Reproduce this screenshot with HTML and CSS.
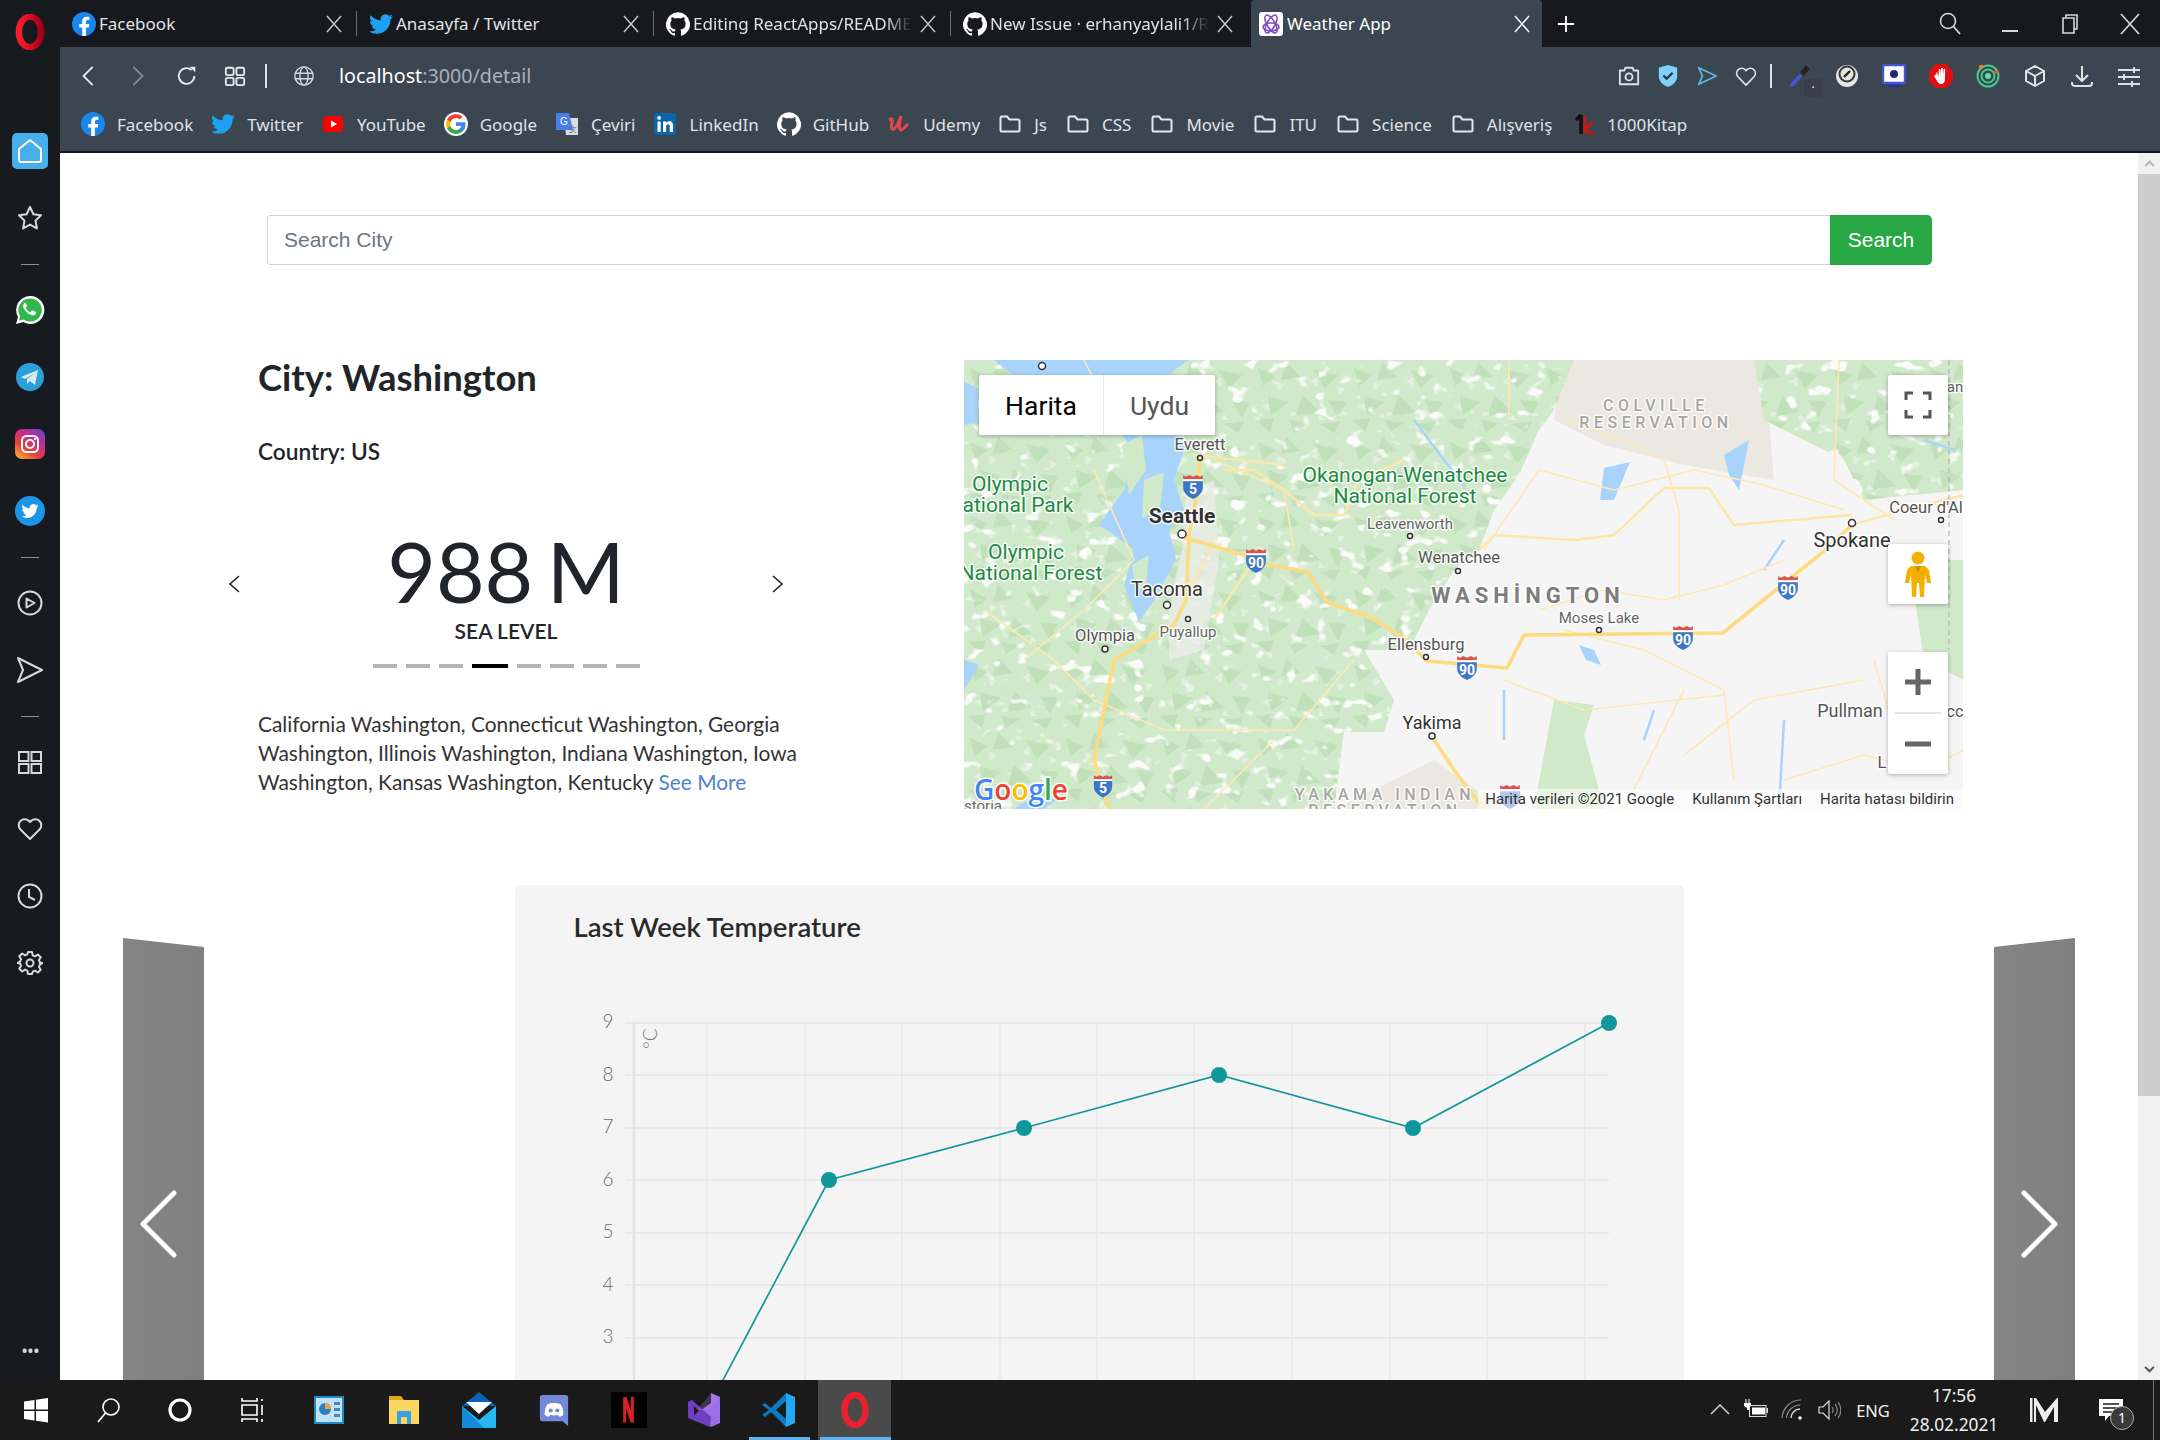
FILE: index.html
```html
<!DOCTYPE html>
<html lang="en">
<head>
<meta charset="utf-8">
<title>Weather App</title>
<link rel="stylesheet" href="styles.css">
</head>
<body>
<svg class="defs" width="0" height="0" aria-hidden="true">
  <defs>
    <symbol id="i-fb" viewBox="0 0 24 24"><circle cx="12" cy="12" r="12" fill="#1a86ee"/><path fill="#fff" d="M16.7 15.5l.5-3.5h-3.3V9.8c0-1 .5-1.9 2-1.9h1.5V5s-1.4-.2-2.7-.2c-2.7 0-4.5 1.6-4.5 4.6V12H7.2v3.5h3v8.4h3.7v-8.4z"/></symbol>
    <symbol id="i-tw" viewBox="0 0 24 24"><path fill="#1da1f2" d="M23.95 4.57a10 10 0 0 1-2.82.77 4.96 4.96 0 0 0 2.16-2.72c-.95.55-2 .96-3.12 1.19a4.92 4.92 0 0 0-8.38 4.48C7.69 8.09 4.07 6.13 1.64 3.16a4.82 4.82 0 0 0-.67 2.48c0 1.71.87 3.21 2.19 4.1a4.9 4.9 0 0 1-2.23-.61v.06c0 2.39 1.7 4.38 3.95 4.83a5 5 0 0 1-2.21.08 4.94 4.94 0 0 0 4.6 3.42A9.87 9.87 0 0 1 0 19.54a14 14 0 0 0 7.56 2.21c9.05 0 14-7.5 14-13.98 0-.21 0-.42-.02-.63a9.94 9.94 0 0 0 2.46-2.55z"/></symbol>
    <symbol id="i-gh" viewBox="0 0 24 24"><path fill="#fff" d="M12 .3a12 12 0 0 0-3.8 23.4c.6.1.8-.3.8-.6v-2c-3.3.7-4-1.6-4-1.6-.6-1.4-1.4-1.8-1.4-1.8-1-.7.1-.7.1-.7 1.2.1 1.8 1.2 1.8 1.2 1 1.8 2.8 1.3 3.5 1 .1-.8.4-1.3.8-1.6-2.7-.3-5.5-1.3-5.5-6 0-1.2.5-2.3 1.3-3.1-.2-.4-.6-1.6 0-3.2 0 0 1-.3 3.4 1.2a11.5 11.5 0 0 1 6 0c2.3-1.5 3.3-1.2 3.3-1.2.6 1.6.2 2.8 0 3.2.9.8 1.3 1.9 1.3 3.2 0 4.6-2.8 5.6-5.5 5.9.5.4.9 1 .9 2.2v3.3c0 .3.1.7.8.6A12 12 0 0 0 12 .3"/></symbol>
    <symbol id="i-folder" viewBox="0 0 24 24"><path fill="none" stroke="#e4e8ec" stroke-width="2" stroke-linejoin="round" d="M2.5 6a1.5 1.5 0 0 1 1.5-1.5h5l2.5 3h8.5a1.5 1.5 0 0 1 1.5 1.5v9a1.5 1.5 0 0 1-1.5 1.5H4A1.5 1.5 0 0 1 2.5 18z"/></symbol>
    <symbol id="i-shield" viewBox="0 0 24 24"><path fill="#7fd0fb" d="M12 0l10 3v9c0 6-4.500 10-10 12C6.500 22 2 18 2 12V3z"/><path fill="none" stroke="#23303c" stroke-width="2.400" d="M7 11.500l3.500 3.500L17 8.500"/></symbol>
    <symbol id="i-90" viewBox="0 0 24 28"><path fill="#d9534f" d="M1 6V1l3 2 4-2 4 2 4-2 4 2 3-2v5z"/><path fill="#fff" d="M1 6h22v2H1z"/><path fill="#3d76c8" d="M1 8h22v7c0 6-5 10-11 13C6 25 1 21 1 15z"/></symbol>
    <symbol id="i-x" viewBox="0 0 16 18"><path fill="none" stroke="currentColor" stroke-width="1.400" d="M1 1l14 16M15 1L1 17"/></symbol>
  </defs>
</svg>

<div class="window">
  <div class="browser">
    <aside class="sidebar">
      <div class="side-logo">
        <svg class="ic-logo" viewBox="0 0 30 34"><defs><linearGradient id="op" x1="0" x2="1"><stop offset="0" stop-color="#ff1b2d"/><stop offset="1" stop-color="#a70014"/></linearGradient></defs><ellipse cx="15" cy="17" rx="10.500" ry="14.500" fill="none" stroke="url(#op)" stroke-width="6"/></svg>
      </div>
      <div class="side-item"><span class="home-btn"><svg class="ic-26" viewBox="0 0 26 26"><path fill="none" stroke="#fff" stroke-width="2" stroke-linejoin="round" d="M2 11L13 2l11 9v11a2 2 0 0 1-2 2H4a2 2 0 0 1-2-2z"/></svg></span></div>
      <div class="side-item"><svg class="ic-26" viewBox="0 0 26 26"><path fill="none" stroke="#d5d8dc" stroke-width="2" stroke-linejoin="round" d="M13 2l3.400 7.200 7.600 1-5.500 5.400 1.400 7.800-6.900-3.800-6.900 3.800 1.400-7.800L2 10.200l7.600-1z"/></svg></div>
      <div class="side-sep"></div>
      <div class="side-item"><svg class="ic-30" viewBox="0 0 30 30"><path fill="#fff" d="M15 1a14 14 0 0 0-12 21L1 29l7.300-1.900A14 14 0 1 0 15 1z"/><path fill="#31b84c" d="M15 3.400a11.600 11.600 0 0 0-9.800 17.800l-1.200 4.600 4.700-1.200A11.600 11.600 0 1 0 15 3.400z"/><path fill="#fff" d="M11 8.500c-.400-.900-1.300-.800-1.800-.3-1.500 1.500-1.500 3.600.3 6.300 2.400 3.500 5.500 5.700 8.300 5.800 1.800 0 3.200-1.200 3.300-2.600 0-.4-.100-.7-.500-.9l-2.900-1.400c-.4-.2-.7-.1-1 .2l-1 1.200c-.2.300-.5.300-.8.200-1.700-.7-3.100-2-4-3.600-.2-.3-.1-.5.100-.8l.8-1c.2-.2.200-.5.100-.8z"/></svg></div>
      <div class="side-item"><svg class="ic-28" viewBox="0 0 28 28"><circle cx="14" cy="14" r="14" fill="#2a9fd8"/><path fill="#dbeaf4" d="M5 14l17-7-3 15-5-4-3 3v-5l8-6-10 6z"/></svg></div>
      <div class="side-item"><span class="insta"><svg class="ic-30" viewBox="0 0 30 30"><rect x="7" y="7" width="16" height="16" rx="4.500" fill="none" stroke="#fff" stroke-width="2"/><circle cx="15" cy="15" r="4" fill="none" stroke="#fff" stroke-width="2"/><circle cx="20" cy="10" r="1.200" fill="#fff"/></svg></span></div>
      <div class="side-item"><svg class="ic-30" viewBox="0 0 30 30"><circle cx="15" cy="15" r="15" fill="#1d95e6"/><svg x="6.500" y="6.500" width="17" height="17" viewBox="0 0 24 24"><path fill="#fff" d="M23.950 4.570a10 10 0 0 1-2.820.77 4.960 4.960 0 0 0 2.160-2.720c-.95.55-2 .96-3.120 1.190a4.920 4.920 0 0 0-8.380 4.480C7.690 8.090 4.070 6.130 1.640 3.160a4.820 4.820 0 0 0-.67 2.480c0 1.710.87 3.210 2.190 4.100a4.900 4.900 0 0 1-2.230-.61v.06c0 2.390 1.700 4.380 3.950 4.830a5 5 0 0 1-2.210.08 4.940 4.940 0 0 0 4.600 3.420A9.870 9.870 0 0 1 0 19.540a14 14 0 0 0 7.560 2.210c9.050 0 14-7.500 14-13.980 0-.21 0-.42-.02-.63a9.940 9.940 0 0 0 2.460-2.550z"/></svg></svg></div>
      <div class="side-sep"></div>
      <div class="side-item"><svg class="ic-26" viewBox="0 0 26 26"><circle cx="13" cy="13" r="11.500" fill="none" stroke="#d5d8dc" stroke-width="2"/><path fill="none" stroke="#d5d8dc" stroke-width="2" stroke-linejoin="round" d="M9.500 8.500l8 4.500-8 4.500z"/></svg></div>
      <div class="side-item"><svg class="ic-28" viewBox="0 0 28 28"><path fill="none" stroke="#d5d8dc" stroke-width="2" stroke-linejoin="round" d="M2 2l24 12-24 12 5-12z"/></svg></div>
      <div class="side-sep"></div>
      <div class="side-item"><svg class="ic-26" viewBox="0 0 26 26"><g fill="none" stroke="#d5d8dc" stroke-width="2"><rect x="2" y="3" width="9.500" height="9"/><rect x="14.500" y="3" width="9.500" height="9"/><rect x="2" y="15" width="9.500" height="9"/><rect x="14.500" y="15" width="9.500" height="9"/></g></svg></div>
      <div class="side-item"><svg class="ic-26" viewBox="0 0 26 26"><path fill="none" stroke="#d5d8dc" stroke-width="2" stroke-linejoin="round" d="M13 23L3.500 13.500a6 6 0 0 1 8.500-8.500l1 1 1-1a6 6 0 0 1 8.500 8.500z"/></svg></div>
      <div class="side-item"><svg class="ic-26" viewBox="0 0 26 26"><circle cx="13" cy="13" r="11.500" fill="none" stroke="#d5d8dc" stroke-width="2"/><path fill="none" stroke="#d5d8dc" stroke-width="2" d="M12 6v8l6 3"/></svg></div>
      <div class="side-item"><svg class="ic-26" viewBox="0 0 26 26"><circle cx="13" cy="13" r="3.500" fill="none" stroke="#d5d8dc" stroke-width="2"/><path fill="none" stroke="#d5d8dc" stroke-width="2" stroke-linejoin="round" d="M11 2h4l.7 3.300 2.300 1 2.900-1.800 2.800 2.800-1.800 2.900 1 2.300L26 13l-3.100 1.500-1 2.300 1.800 2.900-2.800 2.800-2.900-1.800-2.300 1L15 24h-4l-.7-3.300-2.300-1-2.900 1.800-2.800-2.800 1.800-2.900-1-2.300L0 13l3.100-1.500 1-2.300-1.800-2.900 2.800-2.800 2.900 1.800 2.300-1z"/></svg></div>
      <div class="side-more">&#8226;&#8226;&#8226;</div>
    </aside>

    <div class="main">
      <div class="tabstrip">
        <div class="tab"><svg class="fav"><use href="#i-fb"/></svg><span class="tab-title">Facebook</span><svg class="tab-x"><use href="#i-x"/></svg></div>
        <div class="tab"><svg class="fav"><use href="#i-tw"/></svg><span class="tab-title">Anasayfa / Twitter</span><svg class="tab-x"><use href="#i-x"/></svg></div>
        <div class="tab"><svg class="fav"><use href="#i-gh"/></svg><span class="tab-title tab-fade">Editing ReactApps/README</span><svg class="tab-x"><use href="#i-x"/></svg></div>
        <div class="tab tab-plain"><svg class="fav"><use href="#i-gh"/></svg><span class="tab-title tab-fade">New Issue · erhanyaylali1/R</span><svg class="tab-x"><use href="#i-x"/></svg></div>
        <div class="tab tab-active">
          <span class="fav-box"><svg class="ic-fill" viewBox="0 0 24 24"><g fill="none" stroke="#7d4fc4" stroke-width="1.600"><ellipse cx="12" cy="12" rx="10" ry="4" transform="rotate(60 12 12)"/><ellipse cx="12" cy="12" rx="10" ry="4" transform="rotate(-60 12 12)"/><ellipse cx="12" cy="15" rx="8" ry="4"/></g></svg></span>
          <span class="tab-title">Weather App</span><svg class="tab-x"><use href="#i-x"/></svg>
        </div>
        <svg class="tab-plus" viewBox="0 0 20 20"><path stroke="#fff" stroke-width="2" d="M10 1v18M1 10h18"/></svg>
        <div class="win-ctrls">
          <span class="win-c"><svg class="ic-24" viewBox="0 0 24 24"><circle cx="10" cy="9" r="7.500" fill="none" stroke="#d5d8dc" stroke-width="1.600"/><path stroke="#d5d8dc" stroke-width="1.800" d="M15.500 14.500l6.500 7.500"/></svg></span>
          <span class="win-c"><svg class="ic-24" viewBox="0 0 24 24"><path stroke="#d5d8dc" stroke-width="2" d="M4 19h16"/></svg></span>
          <span class="win-c"><svg class="ic-24" viewBox="0 0 24 24"><path fill="none" stroke="#d5d8dc" stroke-width="1.600" d="M8 6V3h11v14h-3M5 6h11v15H5z"/></svg></span>
          <span class="win-c"><svg class="ic-24" viewBox="0 0 24 24"><path stroke="#d5d8dc" stroke-width="1.700" d="M3 2l18 20M21 2L3 22"/></svg></span>
        </div>
      </div>

      <div class="toolbar">
        <svg class="tb tb-back" viewBox="0 0 24 24"><path fill="none" stroke="#e8ebee" stroke-width="2" d="M16 2L6 12l10 10"/></svg>
        <svg class="tb tb-fwd" viewBox="0 0 24 24"><path fill="none" stroke="#7f8994" stroke-width="2" d="M8 2l10 10L8 22"/></svg>
        <svg class="tb tb-reload" viewBox="0 0 24 24"><path fill="none" stroke="#e8ebee" stroke-width="2" d="M20 12a8.500 8.500 0 1 1-3-6.500"/><path fill="#e8ebee" d="M15 2l6 0v6z"/></svg>
        <svg class="tb tb-grid" viewBox="0 0 24 24"><g fill="none" stroke="#e8ebee" stroke-width="2"><rect x="2" y="3" width="8.500" height="8" rx="1.500"/><rect x="13.500" y="3" width="8.500" height="8" rx="1.500"/><rect x="2" y="14" width="8.500" height="8" rx="1.500"/><rect x="13.500" y="14" width="8.500" height="8" rx="1.500"/></g></svg>
        <span class="tb-sep"></span>
        <svg class="tb tb-globe" viewBox="0 0 24 24"><g fill="none" stroke="#d5d8dc" stroke-width="1.500"><circle cx="12" cy="12" r="10"/><ellipse cx="12" cy="12" rx="4.500" ry="10"/><path d="M2 9h20M2 15h20"/></g></svg>
        <div class="url"><span class="url-host">localhost</span><span class="url-rest">:3000/detail</span></div>
        <div class="tb-right">
          <div class="tb-group-a">
            <svg class="tr" viewBox="0 0 24 24"><path fill="none" stroke="#dfe2e5" stroke-width="2" stroke-linejoin="round" d="M2 6h5l1-3h8l1 3h5v15H2z"/><circle cx="12" cy="13" r="3.800" fill="none" stroke="#dfe2e5" stroke-width="2"/></svg>
            <svg class="tr"><use href="#i-shield"/></svg>
            <svg class="tr" viewBox="0 0 24 24"><path fill="none" stroke="#63b4e4" stroke-width="2" stroke-linejoin="round" d="M3 3l19 9-19 9 4-9z"/></svg>
            <svg class="tr" viewBox="0 0 24 24"><path fill="none" stroke="#dfe2e5" stroke-width="1.800" stroke-linejoin="round" d="M12 22L3 12.500a5.500 5.500 0 0 1 8-7.500l1 1.200 1-1.200a5.500 5.500 0 0 1 8 7.500z"/></svg>
          </div>
          <span class="tr-sep"></span>
          <div class="tb-group-b">
            <span class="drop"><svg class="tr" viewBox="0 0 24 24"><path stroke="#4a54d8" stroke-width="4" d="M3 22l10-11"/><path stroke="#222" stroke-width="5" d="M14 10l6-7"/></svg><span class="drop-badge">.</span></span>
            <svg class="tr" viewBox="0 0 24 24"><circle cx="12" cy="12" r="11" fill="#e5e5e2"/><circle cx="12" cy="10" r="8.500" fill="#33383d"/><circle cx="12" cy="10" r="6.500" fill="#e5e5e2"/><path stroke="#222" stroke-width="2.400" d="M9 13l6-6"/></svg>
            <svg class="tr" viewBox="0 0 24 24"><path fill="#24368a" d="M5 19h14l-2 4H7z"/><rect x="1" y="1" width="22" height="18" rx="1.500" fill="#fff" stroke="#4054d8" stroke-width="2.400"/><circle cx="12" cy="10" r="4" fill="#1e2a78"/></svg>
            <svg class="tr" viewBox="0 0 24 24"><path fill="#e10f0f" d="M7 0h10l7 7v10l-7 7H7l-7-7V7z"/><path fill="#fff" d="M8 8l1.500 5 .3-8h1.500l.4 6 .4-7h1.700l.2 7 .7-6h1.500l-.3 11c0 2-1.500 4-3.800 4-2 0-3-1-4-3L5 12l1.300-1z"/></svg>
            <svg class="tr" viewBox="0 0 24 24"><circle cx="12" cy="12" r="10.500" fill="none" stroke="#45c98f" stroke-width="2"/><circle cx="12" cy="12" r="6.500" fill="none" stroke="#45c98f" stroke-width="2"/><circle cx="12" cy="12" r="3" fill="#5be3a4"/><circle cx="5" cy="3" r="2.200" fill="#e8812f"/><circle cx="20" cy="8" r="2" fill="#e8512f"/></svg>
            <svg class="tr" viewBox="0 0 24 24"><path fill="none" stroke="#dfe2e5" stroke-width="2" stroke-linejoin="round" d="M12 2l9 5v10l-9 5-9-5V7zM3 7l9 5 9-5M12 12v10"/></svg>
            <svg class="tr" viewBox="0 0 24 24"><path fill="none" stroke="#dfe2e5" stroke-width="2" d="M12 2v14M6 11l6 6 6-6M2 18v1a3 3 0 0 0 3 3h14a3 3 0 0 0 3-3v-1"/></svg>
            <svg class="tr" viewBox="0 0 24 24"><path fill="none" stroke="#dfe2e5" stroke-width="2" d="M1 6h22M1 13h22M1 20h22M17 3v6M7 10v6M15 17v6"/></svg>
          </div>
        </div>
      </div>

      <nav class="bookmarks">
        <a class="bm"><svg class="bm-ic"><use href="#i-fb"/></svg>Facebook</a>
        <a class="bm"><svg class="bm-ic"><use href="#i-tw"/></svg>Twitter</a>
        <a class="bm"><svg class="bm-ic" viewBox="0 0 24 24"><rect x="2" y="4" width="20" height="16" rx="4" fill="#f00"/><path fill="#fff" d="M10 8.500l6 3.500-6 3.500z"/></svg>YouTube</a>
        <a class="bm"><svg class="bm-ic" viewBox="0 0 24 24"><circle cx="12" cy="12" r="12" fill="#fff"/><path fill="#4285f4" d="M21.500 12.200c0-.7-.1-1.300-.2-1.900H12v3.700h5.300a4.600 4.600 0 0 1-2 3v2.500h3.200c1.900-1.700 3-4.300 3-7.300z"/><path fill="#34a853" d="M12 21.900c2.700 0 4.900-.9 6.500-2.400l-3.200-2.500c-.9.600-2 1-3.300 1-2.600 0-4.800-1.700-5.500-4.100H3.200v2.600A9.900 9.900 0 0 0 12 21.900z"/><path fill="#fbbc05" d="M6.500 13.900a5.900 5.900 0 0 1 0-3.800V7.500H3.200a9.900 9.900 0 0 0 0 8.900z"/><path fill="#ea4335" d="M12 6c1.500 0 2.800.5 3.800 1.500l2.800-2.800A9.900 9.900 0 0 0 3.200 7.500l3.300 2.600C7.200 7.700 9.400 6 12 6z"/></svg>Google</a>
        <a class="bm"><svg class="bm-ic" viewBox="0 0 24 24"><path fill="#dadce0" d="M9 6h14v17H11z"/><path fill="#4a7ee8" d="M1 1h13l4 17H1z"/><text x="5" y="13" class="bm-g">G</text><text x="14" y="20" class="bm-g bm-dim">文</text></svg>Çeviri</a>
        <a class="bm"><svg class="bm-ic" viewBox="0 0 24 24"><rect x="1" y="1" width="22" height="22" rx="2" fill="#0a66a8"/><path fill="#fff" d="M4.500 9.500h3.200V20H4.500zM6.100 4a1.900 1.900 0 1 1 0 3.800 1.900 1.900 0 0 1 0-3.800zM10 9.500h3v1.500c.5-1 1.700-1.800 3.300-1.800 3 0 3.700 2 3.700 4.700V20h-3.200v-5c0-1.300 0-2.800-1.700-2.800s-2 1.300-2 2.700V20H10z"/></svg>LinkedIn</a>
        <a class="bm"><svg class="bm-ic"><use href="#i-gh"/></svg>GitHub</a>
        <a class="bm"><svg class="bm-ic" viewBox="0 0 24 24"><path fill="none" stroke="#e2474b" stroke-width="3" d="M2 8c3-2 4-2 3 3-1 4-1 7 2 6 3-2 5-7 7-13-1 5-3 13 0 14 2 0 4-3 7-6"/></svg>Udemy</a>
        <a class="bm bm-f"><svg class="bm-ic"><use href="#i-folder"/></svg>Js</a>
        <a class="bm bm-f"><svg class="bm-ic"><use href="#i-folder"/></svg>CSS</a>
        <a class="bm bm-f"><svg class="bm-ic"><use href="#i-folder"/></svg>Movie</a>
        <a class="bm bm-f"><svg class="bm-ic"><use href="#i-folder"/></svg>ITU</a>
        <a class="bm bm-f"><svg class="bm-ic"><use href="#i-folder"/></svg>Science</a>
        <a class="bm bm-f"><svg class="bm-ic"><use href="#i-folder"/></svg>Alışveriş</a>
        <a class="bm"><svg class="bm-ic" viewBox="0 0 24 24"><path stroke="#111" stroke-width="3.500" d="M10 3v19M5 8l5-5"/><path stroke="#c01818" stroke-width="3" fill="none" d="M14 4v18M22 10l-8 7 8 6"/></svg>1000Kitap</a>
      </nav>

      <div class="viewport">
        <main class="page">
          <form class="search">
            <div class="search-input">Search City</div>
            <div class="search-btn">Search</div>
          </form>

          <section class="details">
            <div class="info">
              <h1 class="city">City: Washington</h1>
              <p class="country">Country: US</p>
              <div class="metric">
                <svg class="metric-arrow" viewBox="0 0 14 20"><path fill="none" stroke="#222" stroke-width="1.600" d="M12 2L3 10l9 8"/></svg>
                <div class="metric-body">
                  <div class="metric-value">988 M</div>
                  <div class="metric-label">SEA LEVEL</div>
                  <div class="dots">
                    <span class="dot"></span><span class="dot"></span><span class="dot"></span><span class="dot dot-on"></span><span class="dot"></span><span class="dot"></span><span class="dot"></span><span class="dot"></span>
                  </div>
                </div>
                <svg class="metric-arrow" viewBox="0 0 14 20"><path fill="none" stroke="#222" stroke-width="1.600" d="M2 2l9 8-9 8"/></svg>
              </div>
              <p class="about">California Washington, Connecticut Washington, Georgia Washington, Illinois Washington, Indiana Washington, Iowa Washington, Kansas Washington, Kentucky <a class="more">See More</a></p>
            </div>

            <div class="map">
              <svg class="map-canvas" viewBox="0 0 1000 449">
                <defs>
                  <pattern id="terrain" width="96" height="74" patternUnits="userSpaceOnUse">
                    <path fill="#b4d8ac" opacity=".55" d="M6 8l18 8-13 10zM34 2l15 15-20 3zM62 10l24 5-13 14zM16 36l21 6-18 13zM50 35l18 17-24 4zM76 40l18 2-8 17zM4 60l18-2-4 14zM37 60l19 3-14 9zM68 64l20-3-6 12z"/>
                    <path fill="#eef7ec" opacity=".6" d="M25 22l8 3-7 6zM58 22l7-5 1 9zM85 27l8 2-6 6zM10 46l6-3 1 8zM40 50l6 5-8 1zM68 54l5 6-7 0z"/>
                  </pattern>
                  <filter id="mottle" x="0" y="0" width="100%" height="100%">
                    <feTurbulence type="fractalNoise" baseFrequency=".016 .028" numOctaves="3" seed="7"/>
                    <feColorMatrix values="0 0 0 0 .66  0 0 0 0 .82  0 0 0 0 .64  2.400 0 0 0 -1.050"/>
                    <feComposite in2="SourceAlpha" operator="in"/>
                  </filter>
                  <filter id="patches" x="0" y="0" width="100%" height="100%">
                    <feTurbulence type="fractalNoise" baseFrequency=".06 .08" numOctaves="2" seed="21"/>
                    <feColorMatrix values="0 0 0 0 .96  0 0 0 0 .97  0 0 0 0 .95  0 9 0 0 -5.600"/>
                    <feComposite in2="SourceAlpha" operator="in"/>
                  </filter>
                </defs>
                <rect class="m-land" width="1000" height="449"/>
                <path class="m-res" d="M600 0H800L810 120 720 105 640 85 590 60zM370 449L470 400 540 449z"/>
                <path class="m-green" d="M0 0H610L590 50 575 70 555 115 530 150 515 190 490 210 465 250 445 290 400 290 430 340 420 372 380 372 370 449H0zM790 0H1000V130L900 140 880 100 800 60zM945 200H1000V320L960 300zM590 340L630 345 620 375 640 449H570z"/>
                <path class="m-mottle" d="M0 0H610L590 50 575 70 555 115 530 150 515 190 490 210 465 250 445 290 400 290 430 340 420 372 380 372 370 449H0zM790 0H1000V130L900 140 880 100 800 60z"/>
                <path class="m-tex" d="M0 0H610L590 50 575 70 555 115 530 150 515 190 490 210 465 250 445 290 400 290 430 340 420 372 380 372 370 449H0zM790 0H1000V130L900 140 880 100 800 60z"/>
                <path class="m-patch" d="M0 0H610L590 50 575 70 555 115 530 150 515 190 490 210 465 250 445 290 400 290 430 340 420 372 380 372 370 449H0zM790 0H1000V130L900 140 880 100 800 60z"/>
                <path class="m-urban" d="M222 130L250 120 255 200 240 290 205 300 205 250 218 190z"/>
                <path class="m-water" d="M150 60L200 58 222 85 210 120 220 150 205 170 212 200 190 240 175 262 160 225 170 190 150 175 135 165 160 130 170 95zM0 22L14 28V62L0 65zM30 0H225L205 14 120 30 60 24zM640 108L666 102 650 140 636 140zM615 285L630 290 637 305 622 300zM760 95L785 80 775 130 765 115zM0 300L15 305 0 330zM60 442L95 438 80 449H50z"/>
                <path class="m-island" d="M158 85L178 75 182 110 165 135zM180 120L200 112 196 150 178 158zM168 205L185 195 182 225 172 232zM205 30L222 25 224 60 208 55z"/>
                <path class="m-river" d="M450 60L480 100 500 125M820 180L800 210M990 90L960 80M690 350L680 380M820 360L815 449M540 330L540 380"/>
                <path class="m-line" d="M545 0V60M600 60L660 80 700 100 715 150 715 240M875 0L870 120 930 160M520 190L575 110 650 130 730 110 800 125 880 150M575 250L640 230 700 240 760 225 820 200M600 270L680 290 760 330 770 420M720 395L790 340 900 320M540 320L620 350 760 335M20 250L90 300 130 340 200 370 330 370 390 300M130 110L170 200 120 250 60 300M250 100L320 130 330 190M310 380L240 449M720 330L660 449M820 420L900 395 960 410 1000 390M910 300L930 370 960 410M120 0L150 60"/>
                <path class="m-road2" d="M320 105L230 95M260 110L290 110 320 130 350 155 380 155 395 120 440 100M515 190L530 175 610 180 650 175 700 128 745 128 770 165 888 155M222 240L250 180M290 200L250 260M140 30L240 30M888 165L940 150 1000 135"/>
                <path class="m-road" d="M218 177L280 195 305 205 344 212 363 242 408 258 440 278 463 301 543 308 560 275 759 273 808 233 859 192 888 165M236 98L232 140 225 175 222 240 210 265 150 300 130 400 145 449M470 380L490 410 520 449"/>
                <path class="m-border" d="M985 0V290"/>
                <g class="m-dots">
                  <circle cx="78" cy="6" r="3.500"/><circle cx="236" cy="98" r="2.500"/><circle cx="218" cy="174" r="4"/><circle cx="203" cy="245" r="3.500"/><circle cx="224" cy="259" r="2.500"/><circle cx="141" cy="289" r="3"/><circle cx="446" cy="176" r="2.500"/><circle cx="494" cy="211" r="2.500"/><circle cx="635" cy="270" r="2.500"/><circle cx="462" cy="297" r="2.500"/><circle cx="468" cy="376" r="3"/><circle cx="888" cy="163" r="3.500"/><circle cx="977" cy="160" r="2.500"/>
                </g>
                <g>
                  <g transform="translate(218 114)"><use href="#i-90" width="22" height="25"/><text x="11" y="20" class="m-shield-t">5</text></g>
                  <g transform="translate(281 188)"><use href="#i-90" width="22" height="25"/><text x="11" y="20" class="m-shield-t">90</text></g>
                  <g transform="translate(492 295)"><use href="#i-90" width="22" height="25"/><text x="11" y="20" class="m-shield-t">90</text></g>
                  <g transform="translate(708 265)"><use href="#i-90" width="22" height="25"/><text x="11" y="20" class="m-shield-t">90</text></g>
                  <g transform="translate(813 215)"><use href="#i-90" width="22" height="25"/><text x="11" y="20" class="m-shield-t">90</text></g>
                  <g transform="translate(129 414)"><use href="#i-90" width="20" height="24"/><text x="10" y="19" class="m-shield-t">5</text></g>
                  <g transform="translate(535 424)"><use href="#i-90" width="22" height="25"/></g>
                </g>
                <g class="m-text">
                  <text x="236" y="90" class="t-town">Everett</text>
                  <text x="46" y="131" class="t-park">Olympic</text>
                  <text x="54" y="152" class="t-park">ational Park</text>
                  <text x="62" y="199" class="t-park">Olympic</text>
                  <text x="67" y="220" class="t-park">National Forest</text>
                  <text x="441" y="122" class="t-park">Okanogan-Wenatchee</text>
                  <text x="441" y="143" class="t-park">National Forest</text>
                  <text x="218" y="163" class="t-major">Seattle</text>
                  <text x="203" y="236" class="t-city">Tacoma</text>
                  <text x="141" y="281" class="t-town">Olympia</text>
                  <text x="224" y="277" class="t-small">Puyallup</text>
                  <text x="446" y="169" class="t-small">Leavenworth</text>
                  <text x="495" y="203" class="t-town">Wenatchee</text>
                  <text x="564" y="243" class="t-state">WASHİNGTON</text>
                  <text x="635" y="263" class="t-small">Moses Lake</text>
                  <text x="462" y="290" class="t-town">Ellensburg</text>
                  <text x="468" y="369" class="t-city t-yak">Yakima</text>
                  <text x="888" y="187" class="t-city">Spokane</text>
                  <text x="962" y="153" class="t-town">Coeur d'Al</text>
                  <text x="886" y="357" class="t-pull">Pullman</text>
                  <text x="692" y="51" class="t-res">COLVILLE</text>
                  <text x="692" y="68" class="t-res">RESERVATION</text>
                  <text x="421" y="440" class="t-res">YAKAMA INDIAN</text>
                  <text x="421" y="456" class="t-res">RESERVATION</text>
                  <text x="19" y="451" class="t-small">storia</text>
                  <text x="991" y="32" class="t-small">an</text>
                  <text x="991" y="357" class="t-town">cc</text>
                  <text x="918" y="408" class="t-town">L</text>
                </g>
                <text class="m-google" x="10" y="440"><tspan class="g-b">G</tspan><tspan class="g-r">o</tspan><tspan class="g-y">o</tspan><tspan class="g-b">g</tspan><tspan class="g-g">l</tspan><tspan class="g-r">e</tspan></text>
              </svg>
              <div class="map-type"><span class="mt mt-on">Harita</span><span class="mt">Uydu</span></div>
              <div class="map-btn map-full"><svg class="ic-30" viewBox="0 0 30 30"><path fill="none" stroke="#555" stroke-width="3" d="M3 10V3h7M20 3h7v7M27 20v7h-7M10 27H3v-7"/></svg></div>
              <div class="map-btn map-peg"><svg class="peg" viewBox="0 0 26 46"><circle cx="13" cy="7" r="6.500" fill="#f3b000"/><path fill="#f3b000" d="M6 15h14l4 4 2 13-4 0-2-8-1 22h-4l-1-14h-2l-1 14H7L6 24l-2 8-4 0 2-13z"/><path fill="#e08a00" d="M10 15l3 7 3-7z"/></svg></div>
              <div class="map-zoom">
                <div class="zoom-cell"><svg class="ic-26" viewBox="0 0 26 26"><path stroke="#666" stroke-width="5" d="M13 0v26M0 13h26"/></svg></div>
                <div class="zoom-div"></div>
                <div class="zoom-cell"><svg class="ic-26" viewBox="0 0 26 26"><path stroke="#666" stroke-width="5" d="M0 13h26"/></svg></div>
              </div>
              <div class="map-attr"><span>Harita verileri ©2021 Google</span><span>Kullanım Şartları</span><span>Harita hatası bildirin</span></div>
            </div>
          </section>

          <section class="slider">
            <div class="slide-nav slide-nav-l"><svg class="slide-arrow" viewBox="0 0 40 70"><path fill="none" stroke="#fff" stroke-width="5" stroke-linecap="round" stroke-linejoin="round" d="M34 4L3 35l31 31"/></svg></div>
            <div class="chart-card">
              <h2 class="chart-title">Last Week Temperature</h2>
              <svg class="chart" viewBox="515 960 1169 420">
                <g class="grid-h">
                  <path d="M625 1023H1609M625 1075H1609M625 1128H1609M625 1180H1609M625 1233H1609M625 1285H1609M625 1338H1609"/>
                </g>
                <g class="grid-v">
                  <path d="M707 1023V1380M805 1023V1380M902 1023V1380M1000 1023V1380M1097 1023V1380M1194 1023V1380M1292 1023V1380M1390 1023V1380M1487 1023V1380M1585 1023V1380"/>
                </g>
                <path class="axis" d="M634 1023V1380"/>
                <g class="ticks">
                  <text x="608" y="1028">9</text><text x="608" y="1081">8</text><text x="608" y="1133">7</text><text x="608" y="1186">6</text><text x="608" y="1238">5</text><text x="608" y="1291">4</text><text x="608" y="1343">3</text>
                </g>
                <text class="unit" transform="translate(657 1049) rotate(-90)">°C</text>
                <path class="series" d="M634 1548L829 1180 1024 1128 1219 1075 1413 1128 1609 1023"/>
                <g class="points"><circle cx="829" cy="1180" r="8"/><circle cx="1024" cy="1128" r="8"/><circle cx="1219" cy="1075" r="8"/><circle cx="1413" cy="1128" r="8"/><circle cx="1609" cy="1023" r="8"/></g>
              </svg>
            </div>
            <div class="slide-nav slide-nav-r"><svg class="slide-arrow" viewBox="0 0 40 70"><path fill="none" stroke="#fff" stroke-width="5" stroke-linecap="round" stroke-linejoin="round" d="M6 4l31 31L6 66"/></svg></div>
          </section>
        </main>
        <div class="scrollbar">
          <div class="sb-btn"><svg class="sb-ic" viewBox="0 0 12 8"><path fill="none" stroke="#b5b5b5" stroke-width="2.400" d="M1 7l5-5 5 5"/></svg></div>
          <div class="sb-thumb"></div>
          <div class="sb-track"></div>
          <div class="sb-btn"><svg class="sb-ic" viewBox="0 0 12 8"><path fill="none" stroke="#555" stroke-width="2.400" d="M1 1l5 5 5-5"/></svg></div>
        </div>
      </div>
    </div>
  </div>

  <footer class="taskbar">
    <div class="tk-s"><svg class="ic-26" viewBox="0 0 26 26"><path fill="#fff" d="M1 4.500l10.500-1.500v9.500H1zM13 2.800L25 1v11.500H13zM1 14h10.500v9.500L1 22zM13 14h12v11.500L13 23.700z"/></svg></div>
    <div class="tk-s"><svg class="ic-26" viewBox="0 0 26 26"><circle cx="16" cy="10" r="8" fill="none" stroke="#fff" stroke-width="1.600"/><path stroke="#fff" stroke-width="1.800" d="M10.500 16L3 25"/></svg></div>
    <div class="tk-s"><svg class="ic-26" viewBox="0 0 26 26"><circle cx="13" cy="13" r="10" fill="none" stroke="#fff" stroke-width="3.200"/></svg></div>
    <div class="tk-s"><svg class="ic-26" viewBox="0 0 26 26"><path fill="none" stroke="#fff" stroke-width="1.600" d="M3 1v3h15V1M3 8h15v10H3zM3 25v-3h15v3M23 2v2M23 8v10M23 22v3"/></svg></div>
    <div class="tk-a tk-first"><svg class="ic-32" viewBox="0 0 32 32"><rect x="1" y="2" width="30" height="28" fill="#1e88c9"/><rect x="3" y="4" width="26" height="24" fill="#bfe3f5"/><circle cx="12" cy="15" r="6" fill="#2a7fc0"/><path fill="#f2a13c" d="M12 15V9a6 6 0 0 1 6 6z"/><path fill="#3e86c4" d="M21 8h6v3h-6zM21 14h6v3h-6zM21 20h6v3h-6z"/></svg></div>
    <div class="tk-a"><svg class="ic-32" viewBox="0 0 32 32"><path fill="#e3a31b" d="M1 2h12l3 4H1z"/><path fill="#fbd761" d="M1 6h30v24H1z"/><path fill="#3aa0e4" d="M9 17h14v13h-4v-7h-6v7H9z"/></svg></div>
    <div class="tk-a"><svg class="ic-36" viewBox="0 0 36 36"><path fill="#0a62b4" d="M18 0L35 14H1z"/><path fill="#fff" d="M5 10h26L18 22z"/><path fill="#27b6ef" d="M1 14l17 14 17-14v22H1z"/><path fill="#118bdb" d="M1 36V14l22 22z"/></svg></div>
    <div class="tk-a"><svg class="ic-32" viewBox="0 0 32 34"><path fill="#7289da" d="M4 1h24a3 3 0 0 1 3 3v30l-6-5H4a3 3 0 0 1-3-3V4a3 3 0 0 1 3-3z"/><path fill="#fff" d="M9 11c4-2 10-2 14 0 2 3 3 7 3 11-2 2-4 2-5 2l-1-2c-3 1-5 1-8 0l-1 2c-1 0-3 0-5-2 0-4 1-8 3-11z"/><circle cx="12.500" cy="17.500" r="2.200" fill="#7289da"/><circle cx="19.500" cy="17.500" r="2.200" fill="#7289da"/></svg></div>
    <div class="tk-a"><span class="nflx"><svg class="nflx-n" viewBox="0 0 16 34"><path fill="#d81f26" d="M1 0h4.500L11 18V0h4v34l-4.500-1L5 15v18l-4 1z"/></svg></span></div>
    <div class="tk-a"><svg class="ic-36" viewBox="0 0 36 36"><path fill="#9e6ee4" d="M25 1l9 4v26l-9 4-14-14 14-10z"/><path fill="#6e3fc0" d="M2 10l4-2 19 17-1 10L2 26z"/><path fill="#1a1a1a" d="M8 14v9l5-4z"/><path fill="#b58cf0" d="M25 1l-14 17 14 0 9-13z" opacity=".25"/></svg></div>
    <div class="tk-a tk-under"><svg class="ic-36" viewBox="0 0 36 36"><path fill="#23a9f2" d="M25 1l9 4v26l-9 4z"/><path fill="#0e7ac4" d="M25 1L10 16 4 11 1 13l7 5-7 5 3 2 6-5 15 15v-8l-10-9L25 9z"/></svg></div>
    <div class="tk-a tk-on tk-under-wide"><svg class="ic-36" viewBox="0 0 36 36"><ellipse cx="18" cy="18" rx="10.500" ry="15" fill="none" stroke="#e8212f" stroke-width="6.500"/></svg></div>

    <div class="tray">
      <div class="tr-chev"><svg class="ic-20" viewBox="0 0 20 20"><path fill="none" stroke="#ddd" stroke-width="1.400" d="M1 14l9-9 9 9"/></svg></div>
      <div class="tr-bat"><svg class="ic-24" viewBox="0 0 24 24"><path fill="#fff" d="M0 5h7v3L5 10v2H3v-2L0 8zM1.500 1h1v4h-1zM4.500 1h1v4h-1z"/><rect x="5.500" y="7.500" width="16.500" height="11" fill="none" stroke="#ddd"/><rect x="8" y="9.500" width="13" height="7" fill="#fff"/><rect x="22.500" y="10" width="1.500" height="5" fill="#ddd"/></svg></div>
      <div class="tr-wifi"><svg class="ic-24" viewBox="0 0 24 24"><g fill="none" stroke="#8a8a8a" stroke-width="1.200"><path d="M1 20a19 19 0 0 1 19-18"/><path d="M5.500 20a14 14 0 0 1 14-13"/></g><path fill="none" stroke="#ddd" stroke-width="1.400" d="M10 20a9 9 0 0 1 9-9"/><circle cx="19" cy="20" r="1.800" fill="#fff"/></svg></div>
      <div class="tr-vol"><svg class="ic-24" viewBox="0 0 24 24"><path fill="none" stroke="#ddd" stroke-width="1.200" d="M2 9h4l6-6v18l-6-6H2z"/><path fill="none" stroke="#888" stroke-width="1.200" d="M15 9a5 5 0 0 1 0 6M18 6a9 9 0 0 1 0 12M21 4a13 13 0 0 1 0 16"/></svg></div>
      <div class="tr-lang">ENG</div>
      <div class="tr-clock"><span>17:56</span><span>28.02.2021</span></div>
      <div class="tr-m"><svg class="ic-30" viewBox="0 0 30 30"><path fill="#eee" d="M1 3h2.500v24H1zM28 3l1 0v24h-4V12L16 27h-1L7 10v17H5V3l2 0 9 14z"/></svg></div>
      <div class="tr-note"><span class="note-wrap"><svg class="ic-26" viewBox="0 0 26 26"><path fill="#fff" d="M1 2h24v17H11l-4 5v-5H1z"/><path stroke="#1a1a1a" stroke-width="1.400" d="M5 7h16M5 11h16M5 15h10"/></svg><span class="note-badge">1</span></span></div>
      <div class="tr-desk"></div>
    </div>
  </footer>
</div>
</body>
</html>
```
FILE: styles.css
```css
* { box-sizing: border-box; }
html, body { margin: 0; padding: 0; width: 2160px; height: 1440px; overflow: hidden; background: #fff; }
body { font-family: "Noto Sans", "Open Sans", sans-serif; }
.defs { position: absolute; }
svg { display: block; flex: none; }
p, h1, h2 { margin: 0; }

.ic-20 { width: 20px; height: 20px; }
.ic-24 { width: 24px; height: 24px; }
.ic-26 { width: 26px; height: 26px; }
.ic-28 { width: 28px; height: 28px; }
.ic-30 { width: 30px; height: 30px; }
.ic-32 { width: 32px; height: 32px; }
.ic-36 { width: 36px; height: 36px; }
.ic-fill { width: 100%; height: 100%; }
.ic-logo { width: 32px; height: 36px; }

.window { width: 2160px; height: 1440px; display: flex; flex-direction: column; }
.browser { height: 1380px; display: flex; background: #171b20; }

/* sidebar */
.sidebar { width: 60px; flex: none; display: flex; flex-direction: column; align-items: center; }
.side-logo { height: 117.5px; width: 100%; padding-top: 14px; display: flex; justify-content: center; align-items: flex-start; }
.side-item { height: 67px; width: 100%; display: flex; align-items: center; justify-content: center; }
.side-sep { height: 25px; width: 18px; display: flex; align-items: center; }
.side-sep::before { content: ""; width: 100%; height: 1px; background: #8b9096; }
.home-btn { width: 36px; height: 36px; background: #45b0ea; border-radius: 5px; display: flex; align-items: center; justify-content: center; }
.insta { width: 30px; height: 30px; border-radius: 7px; background: linear-gradient(35deg, #f9b234 5%, #e8413c 35%, #c32a90 65%, #5b4ccf 100%); }
.side-more { margin-top: auto; height: 60px; line-height: 60px; color: #d5d8dc; font-size: 18px; letter-spacing: -1px; }

.main { flex: 1; min-width: 0; display: flex; flex-direction: column; }

/* tabs */
.tabstrip { height: 47px; flex: none; display: flex; align-items: center; background: #17191e; }
.tab { width: 297px; height: 47px; padding: 0 12px; display: flex; align-items: center; position: relative; color: #e0e3e6; font-size: 17px; }
.tab::after { content: ""; position: absolute; right: 0; top: 11px; height: 25px; width: 1px; background: #6b7077; }
.tab-plain::after { display: none; }
.fav { width: 24px; height: 24px; margin-right: 3px; }
.fav-box { width: 24px; height: 24px; background: #fff; border-radius: 3px; margin-right: 4px; flex: none; }
.tab-title { flex: 1; min-width: 0; white-space: nowrap; overflow: hidden; }
.tab-fade { -webkit-mask-image: linear-gradient(90deg, #000 88%, transparent 100%); mask-image: linear-gradient(90deg, #000 88%, transparent 100%); }
.tab-x { width: 16px; height: 18px; margin-left: 8px; margin-right: 3px; color: #c8ccd0; flex: none; }
.tab-active { width: 291px; margin-left: 3px; padding-left: 8px; background: #3c4651; border-radius: 3px 3px 0 0; color: #fff; }
.tab-active::after { display: none; }
.tab-active .tab-x { color: #fff; margin-right: 0; }
.tab-plus { width: 18px; height: 18px; margin-left: 15px; }
.win-ctrls { margin-left: auto; width: 240px; display: flex; }
.win-c { width: 60px; display: flex; justify-content: center; }

/* toolbar */
.toolbar { height: 58px; flex: none; display: flex; align-items: center; background: #3c4651; padding-left: 18px; }
.tb { width: 22px; height: 22px; }
.tb-back { margin-right: 26px; }
.tb-fwd { margin-right: 28px; }
.tb-reload { margin-right: 26px; }
.tb-sep { width: 2px; height: 24px; background: #e0e3e6; margin: 0 26px 0 19px; }
.tb-globe { margin-right: 24px; }
.url { font-size: 19.700px; color: #aab1b9; padding-bottom: 2px; }
.url-host { color: #fff; }
.tb-right { margin-left: auto; display: flex; align-items: center; padding-right: 19px; }
.tb-group-a { display: flex; align-items: center; gap: 17px; }
.tb-group-b { display: flex; align-items: center; gap: 23px; }
.tr { width: 22px; height: 22px; }
.tb-group-b .tr { width: 24px; height: 24px; }
.tr-sep { width: 2px; height: 24px; background: #dfe2e5; margin: 0 16px 0 13px; }
.drop { position: relative; display: block; }
.drop-badge { position: absolute; right: -10px; bottom: -9px; width: 18px; height: 18px; background: #3a3d4d; color: #fff; font-size: 12px; line-height: 10px; text-align: center; }

/* bookmarks */
.bookmarks { height: 48px; flex: none; display: flex; align-items: center; background: #3c4651; border-bottom: 2px solid #14181c; padding: 0 0 8px 21px; gap: 18px; font-size: 17px; color: #dfe3e7; }
.bm { display: flex; align-items: center; gap: 12px; white-space: nowrap; }
.bm-f { margin-right: 1px; }
.bm-ic { width: 24px; height: 24px; }
.bm-g { font-family: "Liberation Sans", sans-serif; font-size: 10px; fill: #fff; }
.bm-dim { fill: #667; font-size: 8px; }

/* page */
.viewport { flex: 1; min-height: 0; display: flex; background: #fff; }
.page { flex: 1; min-width: 0; overflow: hidden; font-family: Lato, "Open Sans", sans-serif; color: #212529; }

.search { margin: 62px 206px 0 207px; height: 50px; display: flex; font-family: "Liberation Sans", Arial, sans-serif; font-size: 21px; }
.search-input { flex: 1; border: 1px solid #ced4da; border-right: 0; border-radius: 4px 0 0 4px; padding: 0 16px; line-height: 48px; color: #6c757d; }
.search-btn { width: 102px; background: #28a745; color: #fff; border-radius: 0 5px 5px 0; text-align: center; line-height: 50px; }

.details { margin-top: 95px; padding-left: 198px; display: flex; }
.info { width: 706px; flex: none; }
.city { font-size: 36.400px; line-height: 44px; font-weight: 700; margin-top: -5px; color: #212529; }
.country { font-size: 22.700px; line-height: 30px; font-weight: 600; margin-top: 38px; }
.metric { margin: 66px 0 0 -33px; width: 562px; display: flex; align-items: flex-start; justify-content: space-between; padding: 0 2px; }
.metric-arrow { width: 14px; height: 20px; margin-top: 41px; }
.metric-body { display: flex; flex-direction: column; align-items: center; }
.metric-value { font-size: 84px; line-height: 80px; margin-top: -2px; font-weight: 400; word-spacing: -8px; white-space: nowrap; }
.metric-label { font-size: 21px; line-height: 28px; margin-top: 6px; font-weight: 600; }
.dots { display: flex; gap: 9px; margin-top: 19px; }
.dot { width: 24px; height: 4px; background: #b4b4b4; }
.dot-on { width: 36px; background: #000; }
.about { font-size: 20.900px; line-height: 29px; width: 560px; margin-top: 41px; color: #333; }
.more { color: #4d82d0; }

/* map */
.map { width: 999px; height: 449px; flex: none; position: relative; overflow: hidden; background: #f5f5f5; }
.map-canvas { width: 1000px; height: 449px; }
.m-land { fill: #f5f5f5; }
.m-res { fill: #ebe8e2; }
.m-green { fill: #cfe9c9; }
.m-mottle { fill: #000; filter: url(#mottle); opacity: .75; }
.m-tex { fill: url(#terrain); }
.m-patch { fill: #000; filter: url(#patches); }
.m-urban { fill: #ececea; opacity: .75; }
.m-water { fill: #a8d4fb; }
.m-island { fill: #cfe9c9; }
.m-river { fill: none; stroke: #a8d4fb; stroke-width: 2.500; }
.m-line { fill: none; stroke: #fde9b4; stroke-width: 1.600; }
.m-road { fill: none; stroke: #fddb80; stroke-width: 3.600; stroke-linejoin: round; }
.m-road2 { fill: none; stroke: #fde7a6; stroke-width: 2.300; stroke-linejoin: round; }
.m-border { fill: none; stroke: #a9a9a9; stroke-width: 1; stroke-dasharray: 5 4; }
.m-dots circle { fill: #fff; stroke: #333; stroke-width: 1.500; }
.m-shield-t { font-family: Roboto, sans-serif; font-size: 14px; font-weight: 700; fill: #fff; text-anchor: middle; }
.m-text text { font-family: Roboto, sans-serif; text-anchor: middle; paint-order: stroke; stroke: rgba(255,255,255,.85); stroke-width: 3px; stroke-linejoin: round; }
.t-park { font-size: 21px; fill: #1e8a43; }
.t-major { font-size: 21px; font-weight: 700; fill: #333; }
.t-city { font-size: 20px; fill: #333; }
.m-text .t-yak { font-size: 18px; }
.m-text .t-pull { font-size: 18px; fill: #555; }
.t-town { font-size: 16.500px; fill: #555; }
.t-small { font-size: 15px; fill: #666; }
.t-state { font-size: 22px; font-weight: 700; fill: #7d7d7d; letter-spacing: 5px; }
.t-res { font-size: 16px; font-weight: 500; fill: #a6a6a0; letter-spacing: 4.500px; }
.m-google { font-family: "Open Sans", sans-serif; font-size: 28px; font-weight: 600; paint-order: stroke; stroke: #fff; stroke-width: 3px; }
.g-b { fill: #4285f4; } .g-r { fill: #ea4335; } .g-y { fill: #fbbc05; } .g-g { fill: #34a853; }

.map-type { position: absolute; left: 15px; top: 15px; height: 60px; display: flex; background: #fff; border-radius: 2px; box-shadow: 0 1px 4px rgba(0,0,0,.3); font-family: Roboto, sans-serif; font-size: 26.500px; color: #565656; }
.mt { width: 111px; display: flex; align-items: center; justify-content: center; }
.mt-on { width: 125px; color: #000; border-right: 1px solid #e6e6e6; }
.map-btn { position: absolute; right: 15px; width: 60px; height: 60px; background: #fff; border-radius: 2px; box-shadow: 0 1px 4px rgba(0,0,0,.3); display: flex; align-items: center; justify-content: center; }
.map-full { top: 15px; }
.map-peg { top: 184px; }
.peg { width: 26px; height: 46px; }
.map-zoom { position: absolute; right: 15px; top: 292px; width: 60px; height: 122px; background: #fff; border-radius: 2px; box-shadow: 0 1px 4px rgba(0,0,0,.3); display: flex; flex-direction: column; align-items: center; }
.zoom-cell { flex: 1; display: flex; align-items: center; justify-content: center; width: 100%; }
.zoom-div { width: 46px; height: 2px; background: #e6e6e6; }
.map-attr { position: absolute; right: 0; bottom: 0; height: 20px; padding: 0 9px 0 7px; display: flex; gap: 18px; background: rgba(255,255,255,.6); font-family: Roboto, sans-serif; font-size: 15px; line-height: 20px; color: #333; white-space: nowrap; }

/* chart */
.slider { margin-top: 76px; padding: 0 63px; display: flex; justify-content: space-between; align-items: flex-start; }
.slide-nav { width: 81px; height: 500px; margin-top: 53px; background: linear-gradient(90deg, #858585, #808080); display: flex; justify-content: center; padding-top: 251px; }
.slide-nav-l { clip-path: polygon(0 0, 100% 9px, 100% 100%, 0 100%); padding-right: 8px; }
.slide-nav-r { clip-path: polygon(0 9px, 100% 0, 100% 100%, 0 100%); padding-left: 6px; }
.slide-arrow { width: 40px; height: 70px; }
.chart-card { width: 1169px; height: 495px; background: #f4f4f4; border-radius: 6px 6px 0 0; flex: none; overflow: hidden; }
.chart-title { height: 75px; padding: 25px 0 0 59px; font-size: 27.500px; line-height: 34px; font-weight: 600; color: #2a2a2a; }
.chart { width: 1169px; height: 420px; }
.grid-h path { stroke: #e8e8e8; stroke-width: 2; fill: none; }
.grid-v path { stroke: #e8e8e8; stroke-width: 1.500; fill: none; }
.axis { stroke: #e2e2e2; stroke-width: 2.500; fill: none; }
.ticks text { font-family: Lato, sans-serif; font-size: 19px; font-weight: 300; fill: #6a6a72; text-anchor: middle; }
.unit { font-family: Lato, sans-serif; font-size: 19px; font-weight: 300; fill: #77777d; }
.series { fill: none; stroke: #14979c; stroke-width: 1.700; }
.points circle { fill: #10979b; }

/* scrollbar */
.scrollbar { width: 22px; flex: none; background: #f1f1f1; display: flex; flex-direction: column; }
.sb-btn { height: 21px; display: flex; align-items: center; justify-content: center; }
.sb-ic { width: 11px; height: 7px; }
.sb-thumb { height: 922px; background: #cdcdcd; }
.sb-track { flex: 1; }

/* taskbar */
.taskbar { height: 60px; flex: none; background: #1a1a1a; display: flex; align-items: stretch; color: #f0f0f0; font-family: "Noto Sans", sans-serif; }
.tk-s { width: 72px; display: flex; align-items: center; justify-content: center; }
.tk-a { width: 75px; display: flex; align-items: center; justify-content: center; position: relative; }
.tk-first { margin-left: 3px; }
.tk-under::after, .tk-under-wide::after { content: ""; position: absolute; bottom: 0; height: 3px; background: #5fb0ee; }
.tk-under::after { left: 8px; right: 6px; }
.tk-under-wide::after { left: 2px; right: 0; }
.tk-on { background: #4a4a4a; margin-left: 2px; width: 73px; }
.nflx { width: 36px; height: 36px; background: #000; display: flex; align-items: center; justify-content: center; }
.nflx-n { width: 13px; height: 26px; }
.tray { margin-left: auto; display: flex; align-items: stretch; }
.tray > div { display: flex; align-items: center; justify-content: center; }
.tr-chev { width: 36px; }
.tr-bat { width: 36px; }
.tr-wifi { width: 37px; }
.tr-vol { width: 36px; }
.tr-lang { width: 52px; font-size: 16.500px; }
.tray > .tr-clock { width: 110px; flex-direction: column; font-size: 17.300px; line-height: 29px; }
.tr-m { width: 70px; }
.tr-note { width: 64px; }
.note-wrap { position: relative; display: block; }
.note-badge { position: absolute; left: 12px; top: 9px; width: 24px; height: 24px; border-radius: 50%; border: 1px solid #aaa; background: #3a3a3a; color: #fff; font-size: 14px; line-height: 22px; text-align: center; }
.tr-desk { width: 11px; border-right: 1px solid #777; margin-right: 6px; }
```
